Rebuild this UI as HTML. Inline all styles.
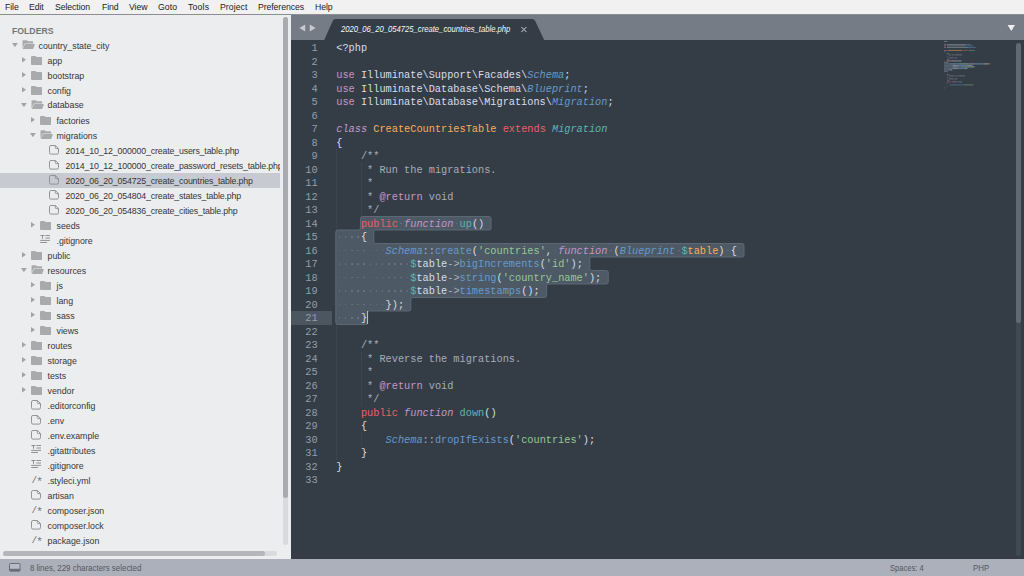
<!DOCTYPE html>
<html lang="en"><head><meta charset="utf-8"><title>2020_06_20_054725_create_countries_table.php - Sublime Text</title>
<style>
*{box-sizing:border-box;margin:0;padding:0}
html,body{width:1024px;height:576px;overflow:hidden;background:#343d46}
body{font-family:"Liberation Sans",sans-serif}
#app{position:relative;width:1024px;height:576px;overflow:hidden}
#menubar{position:absolute;left:0;top:0;width:1024px;height:14.5px;background:#f1f1f1;border-bottom:1px solid #8a8d92}
.mi{position:absolute;top:0.5px;height:14px;line-height:13px;font-size:8.7px;letter-spacing:-0.08px;color:#1a1a1a;white-space:nowrap}
#sidebar{position:absolute;left:0;top:14.5px;width:291px;height:544.5px;background:#ecedee;overflow:hidden}
#sidebar>*,.sbclip>*{position:absolute}
.sbclip{left:0;top:0;width:280px;height:544.5px;overflow:hidden}
#sidebar .folders{left:12px;top:8.5px;height:15px;line-height:15px;font-size:9.6px;font-weight:bold;color:#747577;transform:scaleX(0.905);transform-origin:0 50%}
.sbt{height:15px;line-height:15px;font-size:8.8px;color:#363636;white-space:nowrap;margin-top:-14.5px}
.selrow{left:0;width:280px;height:15px;background:#c7cad0;margin-top:-14.5px}
.icw{margin-top:-14.5px;line-height:0}
.ar{margin-top:-14.5px}
.srcic{margin-top:-14.5px;height:15px;line-height:15px;font-size:9.5px;font-family:"Liberation Mono",monospace;color:#6f7174;letter-spacing:-1px}
.srcic b{font-weight:normal;position:relative;top:2px;font-size:11px}
.vtrack{left:283px;top:2px;width:5px;height:528px;background:#d9dadd;border-radius:2.5px}
.vthumb{left:283px;top:2px;width:5px;height:481px;background:#a9abb1;border-radius:2.5px}
.htrack{left:3px;top:536px;width:274px;height:5px;background:#d9dadd;border-radius:2.5px}
.hthumb{left:3px;top:536px;width:262px;height:5px;background:#b4b6bb;border-radius:2.5px}
#tabbar{position:absolute;left:291px;top:14.5px;width:733px;height:26px;background:#767c85}
.tabsvg{position:absolute;left:0;top:0}
.tabtitle{position:absolute;left:49.5px;top:8px;height:13px;line-height:13px;font-size:8.8px;transform:scaleX(0.872);transform-origin:0 50%;font-style:italic;color:#f8f9fa;white-space:nowrap}
#editor{position:absolute;left:291px;top:40.2px;width:733px;height:518.8px;background:#343d46;overflow:hidden}
#editor>*{position:absolute;margin-left:-291px;margin-top:-40.2px}
.ln{left:291px;width:26.5px;text-align:right;height:13.5px;line-height:13.5px;font-family:"Liberation Mono",monospace;font-size:10.28px;color:#969da7;letter-spacing:-0.05px}
.cl{left:336.3px;height:13.5px;line-height:13.5px;font-family:"Liberation Mono",monospace;font-size:10.28px;color:#d8dee9;white-space:pre}
.cl .k{color:#c695c6}.cl .ki{color:#c695c6;font-style:italic}
.cl .r{color:#ec5f66}.cl .o{color:#f9ae58}
.cl .t{color:#5fb4b4}.cl .ti{color:#5fb4b4;font-style:italic}
.cl .b{color:#6699cc}.cl .bi{color:#6699cc;font-style:italic}
.cl .p{color:#adb4c0}.cl .g{color:#99c794}.cl .c{color:#a6acb9}
.gutterhl{left:291px;width:41px;height:13.5px;background:#4b5661}
.selsvg{left:0;top:0}
.dot{width:1.5px;height:1.5px;background:#6a7682;display:block;border-radius:0.4px}
.guide{width:0;border-left:1px dotted #434d57}
.caret{width:1.6px;height:13px;background:#f9ae58}
.mm{position:absolute;left:0;top:0;pointer-events:none}
.evtrack{position:absolute;left:1016px;top:43px;width:5px;height:513px;background:#3f4953;border-radius:2.5px}
.evthumb{position:absolute;left:1016px;top:43px;width:5px;height:280px;background:#606a74;border-radius:2.5px}
#statusbar{position:absolute;left:0;top:559.2px;width:1024px;height:17px;background:#abb0bb}
.sticon{position:absolute;left:9px;top:4px}
.st{position:absolute;top:1.5px;height:14px;line-height:14px;font-size:8.8px;transform:scaleX(0.9);transform-origin:0 50%;color:#55585f;white-space:nowrap}

</style></head>
<body>
<div id="app">
<div id="menubar"><span class="mi" style="left:5px">File</span><span class="mi" style="left:29px">Edit</span><span class="mi" style="left:55px">Selection</span><span class="mi" style="left:102px">Find</span><span class="mi" style="left:129px">View</span><span class="mi" style="left:158px;letter-spacing:0.05px">Goto</span><span class="mi" style="left:188px;letter-spacing:0.2px">Tools</span><span class="mi" style="left:220px;letter-spacing:0.05px">Project</span><span class="mi" style="left:258px">Preferences</span><span class="mi" style="left:315px">Help</span></div>
<div id="sidebar">
<div class="sbclip"><span class="folders">FOLDERS</span>
<svg class="ar" style="left:12.0px;top:42.8px" width="5.8" height="4.2" viewBox="0 0 5.8 4.2"><path d="M0 0 H5.8 L2.9 4.2 Z" fill="#a2a3a5"/></svg>
<span class="icw" style="left:21.8px;top:40.0px"><svg class="ic" width="13" height="9.4" viewBox="0 0 13 9.4"><path d="M0.5 1 Q0.5 0.2 1.3 0.2 H4.6 Q5.2 0.2 5.5 0.7 L5.8 1.2 H10.3 Q11.1 1.2 11.1 2 V3.4 H3.4 Q2.7 3.4 2.4 4.1 L0.5 8.6 Z" fill="#a9aaac"/><path d="M3.6 4 H12.4 Q13 4 12.8 4.6 L11.3 8.8 Q11.1 9.4 10.4 9.4 H1.2 Q0.5 9.4 0.8 8.8 L2.7 4.6 Q3 4 3.6 4 Z" fill="#a9aaac"/></svg></span>
<span class="sbt" style="left:38.5px;top:38.75px">country_state_city</span>
<svg class="ar" style="left:21.9px;top:57.3px" width="4.1" height="5.6" viewBox="0 0 4.1 5.6"><path d="M0 0 V5.6 L4.1 2.8 Z" fill="#a2a3a5"/></svg>
<span class="icw" style="left:30.9px;top:55.8px"><svg class="ic" width="11.2" height="9" viewBox="0 0 11.2 9"><path d="M0 0.9 Q0 0 0.9 0 H4.2 Q4.8 0 5.1 0.5 L5.4 1 H10.3 Q11.2 1 11.2 1.9 V8.1 Q11.2 9 10.3 9 H0.9 Q0 9 0 8.1 Z" fill="#a9aaac"/></svg></span>
<span class="sbt" style="left:47.5px;top:53.75px">app</span>
<svg class="ar" style="left:21.9px;top:72.3px" width="4.1" height="5.6" viewBox="0 0 4.1 5.6"><path d="M0 0 V5.6 L4.1 2.8 Z" fill="#a2a3a5"/></svg>
<span class="icw" style="left:30.9px;top:70.8px"><svg class="ic" width="11.2" height="9" viewBox="0 0 11.2 9"><path d="M0 0.9 Q0 0 0.9 0 H4.2 Q4.8 0 5.1 0.5 L5.4 1 H10.3 Q11.2 1 11.2 1.9 V8.1 Q11.2 9 10.3 9 H0.9 Q0 9 0 8.1 Z" fill="#a9aaac"/></svg></span>
<span class="sbt" style="left:47.5px;top:68.75px">bootstrap</span>
<svg class="ar" style="left:21.9px;top:87.3px" width="4.1" height="5.6" viewBox="0 0 4.1 5.6"><path d="M0 0 V5.6 L4.1 2.8 Z" fill="#a2a3a5"/></svg>
<span class="icw" style="left:30.9px;top:85.8px"><svg class="ic" width="11.2" height="9" viewBox="0 0 11.2 9"><path d="M0 0.9 Q0 0 0.9 0 H4.2 Q4.8 0 5.1 0.5 L5.4 1 H10.3 Q11.2 1 11.2 1.9 V8.1 Q11.2 9 10.3 9 H0.9 Q0 9 0 8.1 Z" fill="#a9aaac"/></svg></span>
<span class="sbt" style="left:47.5px;top:83.75px">config</span>
<svg class="ar" style="left:21.0px;top:102.8px" width="5.8" height="4.2" viewBox="0 0 5.8 4.2"><path d="M0 0 H5.8 L2.9 4.2 Z" fill="#a2a3a5"/></svg>
<span class="icw" style="left:30.8px;top:100.0px"><svg class="ic" width="13" height="9.4" viewBox="0 0 13 9.4"><path d="M0.5 1 Q0.5 0.2 1.3 0.2 H4.6 Q5.2 0.2 5.5 0.7 L5.8 1.2 H10.3 Q11.1 1.2 11.1 2 V3.4 H3.4 Q2.7 3.4 2.4 4.1 L0.5 8.6 Z" fill="#a9aaac"/><path d="M3.6 4 H12.4 Q13 4 12.8 4.6 L11.3 8.8 Q11.1 9.4 10.4 9.4 H1.2 Q0.5 9.4 0.8 8.8 L2.7 4.6 Q3 4 3.6 4 Z" fill="#a9aaac"/></svg></span>
<span class="sbt" style="left:47.5px;top:98.00px">database</span>
<svg class="ar" style="left:30.9px;top:117.3px" width="4.1" height="5.6" viewBox="0 0 4.1 5.6"><path d="M0 0 V5.6 L4.1 2.8 Z" fill="#a2a3a5"/></svg>
<span class="icw" style="left:39.9px;top:115.8px"><svg class="ic" width="11.2" height="9" viewBox="0 0 11.2 9"><path d="M0 0.9 Q0 0 0.9 0 H4.2 Q4.8 0 5.1 0.5 L5.4 1 H10.3 Q11.2 1 11.2 1.9 V8.1 Q11.2 9 10.3 9 H0.9 Q0 9 0 8.1 Z" fill="#a9aaac"/></svg></span>
<span class="sbt" style="left:56.5px;top:113.75px">factories</span>
<svg class="ar" style="left:30.0px;top:132.8px" width="5.8" height="4.2" viewBox="0 0 5.8 4.2"><path d="M0 0 H5.8 L2.9 4.2 Z" fill="#a2a3a5"/></svg>
<span class="icw" style="left:39.8px;top:130.0px"><svg class="ic" width="13" height="9.4" viewBox="0 0 13 9.4"><path d="M0.5 1 Q0.5 0.2 1.3 0.2 H4.6 Q5.2 0.2 5.5 0.7 L5.8 1.2 H10.3 Q11.1 1.2 11.1 2 V3.4 H3.4 Q2.7 3.4 2.4 4.1 L0.5 8.6 Z" fill="#a9aaac"/><path d="M3.6 4 H12.4 Q13 4 12.8 4.6 L11.3 8.8 Q11.1 9.4 10.4 9.4 H1.2 Q0.5 9.4 0.8 8.8 L2.7 4.6 Q3 4 3.6 4 Z" fill="#a9aaac"/></svg></span>
<span class="sbt" style="left:56.5px;top:128.75px">migrations</span>
<span class="icw" style="left:49.2px;top:145.1px"><svg class="ic" width="10" height="9.6" viewBox="0 0 10 9.6"><path d="M1.9 0.5 H6.4 L9.5 3.5 V7.7 Q9.5 9.1 8.1 9.1 H1.9 Q0.5 9.1 0.5 7.7 V1.9 Q0.5 0.5 1.9 0.5 Z M6.3 0.7 V2.6 Q6.3 3.6 7.3 3.6 H9.3" fill="none" stroke="#8e8f91" stroke-width="0.95"/></svg></span>
<span class="sbt" style="left:65.5px;top:143.75px;letter-spacing:-0.16px">2014_10_12_000000_create_users_table.php</span>
<span class="icw" style="left:49.2px;top:160.1px"><svg class="ic" width="10" height="9.6" viewBox="0 0 10 9.6"><path d="M1.9 0.5 H6.4 L9.5 3.5 V7.7 Q9.5 9.1 8.1 9.1 H1.9 Q0.5 9.1 0.5 7.7 V1.9 Q0.5 0.5 1.9 0.5 Z M6.3 0.7 V2.6 Q6.3 3.6 7.3 3.6 H9.3" fill="none" stroke="#8e8f91" stroke-width="0.95"/></svg></span>
<span class="sbt" style="left:65.5px;top:158.75px;letter-spacing:-0.16px">2014_10_12_100000_create_password_resets_table.php</span>
<div class="selrow" style="top:173.0px"></div>
<span class="icw" style="left:49.2px;top:175.1px"><svg class="ic" width="10" height="9.6" viewBox="0 0 10 9.6"><path d="M1.9 0.5 H6.4 L9.5 3.5 V7.7 Q9.5 9.1 8.1 9.1 H1.9 Q0.5 9.1 0.5 7.7 V1.9 Q0.5 0.5 1.9 0.5 Z M6.3 0.7 V2.6 Q6.3 3.6 7.3 3.6 H9.3" fill="none" stroke="#8e8f91" stroke-width="0.95"/></svg></span>
<span class="sbt" style="left:65.5px;top:173.75px;letter-spacing:-0.16px">2020_06_20_054725_create_countries_table.php</span>
<span class="icw" style="left:49.2px;top:190.1px"><svg class="ic" width="10" height="9.6" viewBox="0 0 10 9.6"><path d="M1.9 0.5 H6.4 L9.5 3.5 V7.7 Q9.5 9.1 8.1 9.1 H1.9 Q0.5 9.1 0.5 7.7 V1.9 Q0.5 0.5 1.9 0.5 Z M6.3 0.7 V2.6 Q6.3 3.6 7.3 3.6 H9.3" fill="none" stroke="#8e8f91" stroke-width="0.95"/></svg></span>
<span class="sbt" style="left:65.5px;top:188.75px;letter-spacing:-0.16px">2020_06_20_054804_create_states_table.php</span>
<span class="icw" style="left:49.2px;top:205.1px"><svg class="ic" width="10" height="9.6" viewBox="0 0 10 9.6"><path d="M1.9 0.5 H6.4 L9.5 3.5 V7.7 Q9.5 9.1 8.1 9.1 H1.9 Q0.5 9.1 0.5 7.7 V1.9 Q0.5 0.5 1.9 0.5 Z M6.3 0.7 V2.6 Q6.3 3.6 7.3 3.6 H9.3" fill="none" stroke="#8e8f91" stroke-width="0.95"/></svg></span>
<span class="sbt" style="left:65.5px;top:203.75px;letter-spacing:-0.16px">2020_06_20_054836_create_cities_table.php</span>
<svg class="ar" style="left:30.9px;top:222.3px" width="4.1" height="5.6" viewBox="0 0 4.1 5.6"><path d="M0 0 V5.6 L4.1 2.8 Z" fill="#a2a3a5"/></svg>
<span class="icw" style="left:39.9px;top:220.8px"><svg class="ic" width="11.2" height="9" viewBox="0 0 11.2 9"><path d="M0 0.9 Q0 0 0.9 0 H4.2 Q4.8 0 5.1 0.5 L5.4 1 H10.3 Q11.2 1 11.2 1.9 V8.1 Q11.2 9 10.3 9 H0.9 Q0 9 0 8.1 Z" fill="#a9aaac"/></svg></span>
<span class="sbt" style="left:56.5px;top:218.75px">seeds</span>
<span class="icw" style="left:40.0px;top:235.0px"><svg class="ic" width="10.4" height="8" viewBox="0 0 10.4 8"><path d="M0.4 0.5 H4.4 M2.5 0.5 V3.8 M5.4 0.5 H10.2 M5.4 3.0 H10.2 M0.2 5.4 H10.2 M0.2 7.5 H7" fill="none" stroke="#858688" stroke-width="0.9"/></svg></span>
<span class="sbt" style="left:56.5px;top:233.75px">.gitignore</span>
<svg class="ar" style="left:21.9px;top:252.3px" width="4.1" height="5.6" viewBox="0 0 4.1 5.6"><path d="M0 0 V5.6 L4.1 2.8 Z" fill="#a2a3a5"/></svg>
<span class="icw" style="left:30.9px;top:250.8px"><svg class="ic" width="11.2" height="9" viewBox="0 0 11.2 9"><path d="M0 0.9 Q0 0 0.9 0 H4.2 Q4.8 0 5.1 0.5 L5.4 1 H10.3 Q11.2 1 11.2 1.9 V8.1 Q11.2 9 10.3 9 H0.9 Q0 9 0 8.1 Z" fill="#a9aaac"/></svg></span>
<span class="sbt" style="left:47.5px;top:248.75px">public</span>
<svg class="ar" style="left:21.0px;top:267.8px" width="5.8" height="4.2" viewBox="0 0 5.8 4.2"><path d="M0 0 H5.8 L2.9 4.2 Z" fill="#a2a3a5"/></svg>
<span class="icw" style="left:30.8px;top:265.0px"><svg class="ic" width="13" height="9.4" viewBox="0 0 13 9.4"><path d="M0.5 1 Q0.5 0.2 1.3 0.2 H4.6 Q5.2 0.2 5.5 0.7 L5.8 1.2 H10.3 Q11.1 1.2 11.1 2 V3.4 H3.4 Q2.7 3.4 2.4 4.1 L0.5 8.6 Z" fill="#a9aaac"/><path d="M3.6 4 H12.4 Q13 4 12.8 4.6 L11.3 8.8 Q11.1 9.4 10.4 9.4 H1.2 Q0.5 9.4 0.8 8.8 L2.7 4.6 Q3 4 3.6 4 Z" fill="#a9aaac"/></svg></span>
<span class="sbt" style="left:47.5px;top:263.75px">resources</span>
<svg class="ar" style="left:30.9px;top:282.3px" width="4.1" height="5.6" viewBox="0 0 4.1 5.6"><path d="M0 0 V5.6 L4.1 2.8 Z" fill="#a2a3a5"/></svg>
<span class="icw" style="left:39.9px;top:280.8px"><svg class="ic" width="11.2" height="9" viewBox="0 0 11.2 9"><path d="M0 0.9 Q0 0 0.9 0 H4.2 Q4.8 0 5.1 0.5 L5.4 1 H10.3 Q11.2 1 11.2 1.9 V8.1 Q11.2 9 10.3 9 H0.9 Q0 9 0 8.1 Z" fill="#a9aaac"/></svg></span>
<span class="sbt" style="left:56.5px;top:278.75px">js</span>
<svg class="ar" style="left:30.9px;top:297.3px" width="4.1" height="5.6" viewBox="0 0 4.1 5.6"><path d="M0 0 V5.6 L4.1 2.8 Z" fill="#a2a3a5"/></svg>
<span class="icw" style="left:39.9px;top:295.8px"><svg class="ic" width="11.2" height="9" viewBox="0 0 11.2 9"><path d="M0 0.9 Q0 0 0.9 0 H4.2 Q4.8 0 5.1 0.5 L5.4 1 H10.3 Q11.2 1 11.2 1.9 V8.1 Q11.2 9 10.3 9 H0.9 Q0 9 0 8.1 Z" fill="#a9aaac"/></svg></span>
<span class="sbt" style="left:56.5px;top:293.75px">lang</span>
<svg class="ar" style="left:30.9px;top:312.3px" width="4.1" height="5.6" viewBox="0 0 4.1 5.6"><path d="M0 0 V5.6 L4.1 2.8 Z" fill="#a2a3a5"/></svg>
<span class="icw" style="left:39.9px;top:310.8px"><svg class="ic" width="11.2" height="9" viewBox="0 0 11.2 9"><path d="M0 0.9 Q0 0 0.9 0 H4.2 Q4.8 0 5.1 0.5 L5.4 1 H10.3 Q11.2 1 11.2 1.9 V8.1 Q11.2 9 10.3 9 H0.9 Q0 9 0 8.1 Z" fill="#a9aaac"/></svg></span>
<span class="sbt" style="left:56.5px;top:308.75px">sass</span>
<svg class="ar" style="left:30.9px;top:327.3px" width="4.1" height="5.6" viewBox="0 0 4.1 5.6"><path d="M0 0 V5.6 L4.1 2.8 Z" fill="#a2a3a5"/></svg>
<span class="icw" style="left:39.9px;top:325.8px"><svg class="ic" width="11.2" height="9" viewBox="0 0 11.2 9"><path d="M0 0.9 Q0 0 0.9 0 H4.2 Q4.8 0 5.1 0.5 L5.4 1 H10.3 Q11.2 1 11.2 1.9 V8.1 Q11.2 9 10.3 9 H0.9 Q0 9 0 8.1 Z" fill="#a9aaac"/></svg></span>
<span class="sbt" style="left:56.5px;top:323.75px">views</span>
<svg class="ar" style="left:21.9px;top:342.3px" width="4.1" height="5.6" viewBox="0 0 4.1 5.6"><path d="M0 0 V5.6 L4.1 2.8 Z" fill="#a2a3a5"/></svg>
<span class="icw" style="left:30.9px;top:340.8px"><svg class="ic" width="11.2" height="9" viewBox="0 0 11.2 9"><path d="M0 0.9 Q0 0 0.9 0 H4.2 Q4.8 0 5.1 0.5 L5.4 1 H10.3 Q11.2 1 11.2 1.9 V8.1 Q11.2 9 10.3 9 H0.9 Q0 9 0 8.1 Z" fill="#a9aaac"/></svg></span>
<span class="sbt" style="left:47.5px;top:338.75px">routes</span>
<svg class="ar" style="left:21.9px;top:357.3px" width="4.1" height="5.6" viewBox="0 0 4.1 5.6"><path d="M0 0 V5.6 L4.1 2.8 Z" fill="#a2a3a5"/></svg>
<span class="icw" style="left:30.9px;top:355.8px"><svg class="ic" width="11.2" height="9" viewBox="0 0 11.2 9"><path d="M0 0.9 Q0 0 0.9 0 H4.2 Q4.8 0 5.1 0.5 L5.4 1 H10.3 Q11.2 1 11.2 1.9 V8.1 Q11.2 9 10.3 9 H0.9 Q0 9 0 8.1 Z" fill="#a9aaac"/></svg></span>
<span class="sbt" style="left:47.5px;top:353.75px">storage</span>
<svg class="ar" style="left:21.9px;top:372.3px" width="4.1" height="5.6" viewBox="0 0 4.1 5.6"><path d="M0 0 V5.6 L4.1 2.8 Z" fill="#a2a3a5"/></svg>
<span class="icw" style="left:30.9px;top:370.8px"><svg class="ic" width="11.2" height="9" viewBox="0 0 11.2 9"><path d="M0 0.9 Q0 0 0.9 0 H4.2 Q4.8 0 5.1 0.5 L5.4 1 H10.3 Q11.2 1 11.2 1.9 V8.1 Q11.2 9 10.3 9 H0.9 Q0 9 0 8.1 Z" fill="#a9aaac"/></svg></span>
<span class="sbt" style="left:47.5px;top:368.75px">tests</span>
<svg class="ar" style="left:21.9px;top:387.3px" width="4.1" height="5.6" viewBox="0 0 4.1 5.6"><path d="M0 0 V5.6 L4.1 2.8 Z" fill="#a2a3a5"/></svg>
<span class="icw" style="left:30.9px;top:385.8px"><svg class="ic" width="11.2" height="9" viewBox="0 0 11.2 9"><path d="M0 0.9 Q0 0 0.9 0 H4.2 Q4.8 0 5.1 0.5 L5.4 1 H10.3 Q11.2 1 11.2 1.9 V8.1 Q11.2 9 10.3 9 H0.9 Q0 9 0 8.1 Z" fill="#a9aaac"/></svg></span>
<span class="sbt" style="left:47.5px;top:383.75px">vendor</span>
<span class="icw" style="left:31.2px;top:400.1px"><svg class="ic" width="10" height="9.6" viewBox="0 0 10 9.6"><path d="M1.9 0.5 H6.4 L9.5 3.5 V7.7 Q9.5 9.1 8.1 9.1 H1.9 Q0.5 9.1 0.5 7.7 V1.9 Q0.5 0.5 1.9 0.5 Z M6.3 0.7 V2.6 Q6.3 3.6 7.3 3.6 H9.3" fill="none" stroke="#8e8f91" stroke-width="0.95"/></svg></span>
<span class="sbt" style="left:47.5px;top:398.75px">.editorconfig</span>
<span class="icw" style="left:31.2px;top:415.1px"><svg class="ic" width="10" height="9.6" viewBox="0 0 10 9.6"><path d="M1.9 0.5 H6.4 L9.5 3.5 V7.7 Q9.5 9.1 8.1 9.1 H1.9 Q0.5 9.1 0.5 7.7 V1.9 Q0.5 0.5 1.9 0.5 Z M6.3 0.7 V2.6 Q6.3 3.6 7.3 3.6 H9.3" fill="none" stroke="#8e8f91" stroke-width="0.95"/></svg></span>
<span class="sbt" style="left:47.5px;top:413.75px">.env</span>
<span class="icw" style="left:31.2px;top:430.1px"><svg class="ic" width="10" height="9.6" viewBox="0 0 10 9.6"><path d="M1.9 0.5 H6.4 L9.5 3.5 V7.7 Q9.5 9.1 8.1 9.1 H1.9 Q0.5 9.1 0.5 7.7 V1.9 Q0.5 0.5 1.9 0.5 Z M6.3 0.7 V2.6 Q6.3 3.6 7.3 3.6 H9.3" fill="none" stroke="#8e8f91" stroke-width="0.95"/></svg></span>
<span class="sbt" style="left:47.5px;top:428.75px">.env.example</span>
<span class="icw" style="left:31.0px;top:445.0px"><svg class="ic" width="10.4" height="8" viewBox="0 0 10.4 8"><path d="M0.4 0.5 H4.4 M2.5 0.5 V3.8 M5.4 0.5 H10.2 M5.4 3.0 H10.2 M0.2 5.4 H10.2 M0.2 7.5 H7" fill="none" stroke="#858688" stroke-width="0.9"/></svg></span>
<span class="sbt" style="left:47.5px;top:443.75px">.gitattributes</span>
<span class="icw" style="left:31.0px;top:460.0px"><svg class="ic" width="10.4" height="8" viewBox="0 0 10.4 8"><path d="M0.4 0.5 H4.4 M2.5 0.5 V3.8 M5.4 0.5 H10.2 M5.4 3.0 H10.2 M0.2 5.4 H10.2 M0.2 7.5 H7" fill="none" stroke="#858688" stroke-width="0.9"/></svg></span>
<span class="sbt" style="left:47.5px;top:458.75px">.gitignore</span>
<span class="srcic" style="left:31.5px;top:473.0px">/<b>*</b></span>
<span class="sbt" style="left:47.5px;top:473.75px">.styleci.yml</span>
<span class="icw" style="left:31.2px;top:490.1px"><svg class="ic" width="10" height="9.6" viewBox="0 0 10 9.6"><path d="M1.9 0.5 H6.4 L9.5 3.5 V7.7 Q9.5 9.1 8.1 9.1 H1.9 Q0.5 9.1 0.5 7.7 V1.9 Q0.5 0.5 1.9 0.5 Z M6.3 0.7 V2.6 Q6.3 3.6 7.3 3.6 H9.3" fill="none" stroke="#8e8f91" stroke-width="0.95"/></svg></span>
<span class="sbt" style="left:47.5px;top:488.75px">artisan</span>
<span class="srcic" style="left:31.5px;top:503.0px">/<b>*</b></span>
<span class="sbt" style="left:47.5px;top:503.75px">composer.json</span>
<span class="icw" style="left:31.2px;top:520.1px"><svg class="ic" width="10" height="9.6" viewBox="0 0 10 9.6"><path d="M1.9 0.5 H6.4 L9.5 3.5 V7.7 Q9.5 9.1 8.1 9.1 H1.9 Q0.5 9.1 0.5 7.7 V1.9 Q0.5 0.5 1.9 0.5 Z M6.3 0.7 V2.6 Q6.3 3.6 7.3 3.6 H9.3" fill="none" stroke="#8e8f91" stroke-width="0.95"/></svg></span>
<span class="sbt" style="left:47.5px;top:518.75px">composer.lock</span>
<span class="srcic" style="left:31.5px;top:533.0px">/<b>*</b></span>
<span class="sbt" style="left:47.5px;top:533.75px">package.json</span>
</div>
<div class="vtrack"></div><div class="vthumb"></div>
<div class="htrack"></div><div class="hthumb"></div>
</div>
<div id="tabbar">
<svg class="tabsvg" width="733" height="26" viewBox="0 0 733 26"><path d="M32.8 26 L41.8 5.8 Q42.7 4 44.7 4 H241.3 Q243.2 4 244.1 5.8 L253.6 26 Z" fill="#343d46"/><path d="M8.4 13 L14.2 9.4 V16.6 Z M18.8 9.4 V16.6 L24.6 13 Z" fill="#c6cad0"/><path d="M716.6 10.1 H724 L720.3 16 Z" fill="#eceef0"/><path d="M230.4 12 L235.4 17 M235.4 12 L230.4 17" stroke="#b4b9c1" stroke-width="1.05" fill="none"/></svg>
<span class="tabtitle">2020_06_20_054725_create_countries_table.php</span>
</div>
<div id="editor">
<div class="gutterhl" style="top:311.00px"></div>
<div class="guide" style="left:336.3px;top:149.0px;height:310.5px"></div>
<div class="guide" style="left:361.0px;top:162.5px;height:54.0px"></div>
<div class="guide" style="left:361.0px;top:351.5px;height:54.0px"></div>
<div class="guide" style="left:361.0px;top:432.5px;height:13.5px"></div>
<svg class="selsvg" width="1024" height="576" viewBox="0 0 1024 576"><path d="M489.05 216.50 Q491.05 216.50 491.05 218.50 L491.05 228.00 Q491.05 230.00 489.05 230.00 L375.82 230.00 Q373.82 230.00 373.82 232.00 L373.82 241.50 Q373.82 243.50 375.82 243.50 L742.02 243.50 Q744.02 243.50 744.02 245.50 L744.02 255.00 Q744.02 257.00 742.02 257.00 L591.77 257.00 Q589.77 257.00 589.77 259.00 L589.77 268.50 Q589.77 270.50 591.77 270.50 L606.28 270.50 Q608.28 270.50 608.28 272.50 L608.28 282.00 Q608.28 284.00 606.28 284.00 L548.58 284.00 Q546.58 284.00 546.58 286.00 L546.58 295.50 Q546.58 297.50 544.58 297.50 L412.84 297.50 Q410.84 297.50 410.84 299.50 L410.84 309.00 Q410.84 311.00 408.84 311.00 L369.65 311.00 Q367.65 311.00 367.65 313.00 L367.65 322.50 Q367.65 324.50 365.65 324.50 L337.80 324.50 Q335.80 324.50 335.80 322.50 L335.80 232.00 Q335.80 230.00 337.80 230.00 L358.48 230.00 Q360.48 230.00 360.48 228.00 L360.48 218.50 Q360.48 216.50 362.48 216.50 Z" fill="#4d5965" stroke="#606c78" stroke-width="0.9"/></svg>
<i class="dot" style="left:400.3px;top:222.8px"></i><i class="dot" style="left:455.9px;top:222.8px"></i>
<i class="dot" style="left:338.6px;top:236.3px"></i><i class="dot" style="left:344.8px;top:236.3px"></i><i class="dot" style="left:351.0px;top:236.3px"></i><i class="dot" style="left:357.1px;top:236.3px"></i>
<i class="dot" style="left:338.6px;top:249.8px"></i><i class="dot" style="left:344.8px;top:249.8px"></i><i class="dot" style="left:351.0px;top:249.8px"></i><i class="dot" style="left:357.1px;top:249.8px"></i><i class="dot" style="left:363.3px;top:249.8px"></i><i class="dot" style="left:369.5px;top:249.8px"></i><i class="dot" style="left:375.7px;top:249.8px"></i><i class="dot" style="left:381.8px;top:249.8px"></i><i class="dot" style="left:554.6px;top:249.8px"></i><i class="dot" style="left:610.1px;top:249.8px"></i><i class="dot" style="left:678.0px;top:249.8px"></i><i class="dot" style="left:727.3px;top:249.8px"></i>
<i class="dot" style="left:338.6px;top:263.4px"></i><i class="dot" style="left:344.8px;top:263.4px"></i><i class="dot" style="left:351.0px;top:263.4px"></i><i class="dot" style="left:357.1px;top:263.4px"></i><i class="dot" style="left:363.3px;top:263.4px"></i><i class="dot" style="left:369.5px;top:263.4px"></i><i class="dot" style="left:375.7px;top:263.4px"></i><i class="dot" style="left:381.8px;top:263.4px"></i><i class="dot" style="left:388.0px;top:263.4px"></i><i class="dot" style="left:394.2px;top:263.4px"></i><i class="dot" style="left:400.3px;top:263.4px"></i><i class="dot" style="left:406.5px;top:263.4px"></i>
<i class="dot" style="left:338.6px;top:276.9px"></i><i class="dot" style="left:344.8px;top:276.9px"></i><i class="dot" style="left:351.0px;top:276.9px"></i><i class="dot" style="left:357.1px;top:276.9px"></i><i class="dot" style="left:363.3px;top:276.9px"></i><i class="dot" style="left:369.5px;top:276.9px"></i><i class="dot" style="left:375.7px;top:276.9px"></i><i class="dot" style="left:381.8px;top:276.9px"></i><i class="dot" style="left:388.0px;top:276.9px"></i><i class="dot" style="left:394.2px;top:276.9px"></i><i class="dot" style="left:400.3px;top:276.9px"></i><i class="dot" style="left:406.5px;top:276.9px"></i>
<i class="dot" style="left:338.6px;top:290.4px"></i><i class="dot" style="left:344.8px;top:290.4px"></i><i class="dot" style="left:351.0px;top:290.4px"></i><i class="dot" style="left:357.1px;top:290.4px"></i><i class="dot" style="left:363.3px;top:290.4px"></i><i class="dot" style="left:369.5px;top:290.4px"></i><i class="dot" style="left:375.7px;top:290.4px"></i><i class="dot" style="left:381.8px;top:290.4px"></i><i class="dot" style="left:388.0px;top:290.4px"></i><i class="dot" style="left:394.2px;top:290.4px"></i><i class="dot" style="left:400.3px;top:290.4px"></i><i class="dot" style="left:406.5px;top:290.4px"></i>
<i class="dot" style="left:338.6px;top:303.9px"></i><i class="dot" style="left:344.8px;top:303.9px"></i><i class="dot" style="left:351.0px;top:303.9px"></i><i class="dot" style="left:357.1px;top:303.9px"></i><i class="dot" style="left:363.3px;top:303.9px"></i><i class="dot" style="left:369.5px;top:303.9px"></i><i class="dot" style="left:375.7px;top:303.9px"></i><i class="dot" style="left:381.8px;top:303.9px"></i>
<i class="dot" style="left:338.6px;top:317.4px"></i><i class="dot" style="left:344.8px;top:317.4px"></i><i class="dot" style="left:351.0px;top:317.4px"></i><i class="dot" style="left:357.1px;top:317.4px"></i>
<span class="ln" style="top:42.40px">1</span>
<pre class="cl" style="top:42.40px">&lt;?php</pre>
<span class="ln" style="top:55.90px">2</span>
<span class="ln" style="top:69.40px">3</span>
<pre class="cl" style="top:69.40px"><span class="k">use</span> Illuminate\Support\Facades\<span class="bi">Schema</span>;</pre>
<span class="ln" style="top:82.90px">4</span>
<pre class="cl" style="top:82.90px"><span class="k">use</span> Illuminate\Database\Schema\<span class="bi">Blueprint</span>;</pre>
<span class="ln" style="top:96.40px">5</span>
<pre class="cl" style="top:96.40px"><span class="k">use</span> Illuminate\Database\Migrations\<span class="bi">Migration</span>;</pre>
<span class="ln" style="top:109.90px">6</span>
<span class="ln" style="top:123.40px">7</span>
<pre class="cl" style="top:123.40px"><span class="ki">class</span> <span class="o">CreateCountriesTable</span> <span class="r">extends</span> <span class="ti">Migration</span></pre>
<span class="ln" style="top:136.90px">8</span>
<pre class="cl" style="top:136.90px">{</pre>
<span class="ln" style="top:150.40px">9</span>
<pre class="cl" style="top:150.40px">    <span class="c">/**</span></pre>
<span class="ln" style="top:163.90px">10</span>
<pre class="cl" style="top:163.90px">    <span class="c"> * Run the migrations.</span></pre>
<span class="ln" style="top:177.40px">11</span>
<pre class="cl" style="top:177.40px">    <span class="c"> *</span></pre>
<span class="ln" style="top:190.90px">12</span>
<pre class="cl" style="top:190.90px">    <span class="c"> * </span><span class="k">@return</span><span class="c"> void</span></pre>
<span class="ln" style="top:204.40px">13</span>
<pre class="cl" style="top:204.40px">    <span class="c"> */</span></pre>
<span class="ln" style="top:217.90px">14</span>
<pre class="cl" style="top:217.90px">    <span class="r">public</span> <span class="ki">function</span> <span class="t">up</span>()</pre>
<span class="ln" style="top:231.40px">15</span>
<pre class="cl" style="top:231.40px">    {</pre>
<span class="ln" style="top:244.90px">16</span>
<pre class="cl" style="top:244.90px">        <span class="bi">Schema</span><span class="p">::</span><span class="b">create</span>(<span class="g">'countries'</span>, <span class="ki">function</span> (<span class="bi">Blueprint</span> <span class="t">$</span><span class="o">table</span>) {</pre>
<span class="ln" style="top:258.40px">17</span>
<pre class="cl" style="top:258.40px">            <span class="t">$</span>table<span class="p">-&gt;</span><span class="b">bigIncrements</span>(<span class="g">'id'</span>);</pre>
<span class="ln" style="top:271.90px">18</span>
<pre class="cl" style="top:271.90px">            <span class="t">$</span>table<span class="p">-&gt;</span><span class="b">string</span>(<span class="g">'country_name'</span>);</pre>
<span class="ln" style="top:285.40px">19</span>
<pre class="cl" style="top:285.40px">            <span class="t">$</span>table<span class="p">-&gt;</span><span class="b">timestamps</span>();</pre>
<span class="ln" style="top:298.90px">20</span>
<pre class="cl" style="top:298.90px">        });</pre>
<span class="ln" style="top:312.40px">21</span>
<pre class="cl" style="top:312.40px">    }</pre>
<span class="ln" style="top:325.90px">22</span>
<span class="ln" style="top:339.40px">23</span>
<pre class="cl" style="top:339.40px">    <span class="c">/**</span></pre>
<span class="ln" style="top:352.90px">24</span>
<pre class="cl" style="top:352.90px">    <span class="c"> * Reverse the migrations.</span></pre>
<span class="ln" style="top:366.40px">25</span>
<pre class="cl" style="top:366.40px">    <span class="c"> *</span></pre>
<span class="ln" style="top:379.90px">26</span>
<pre class="cl" style="top:379.90px">    <span class="c"> * </span><span class="k">@return</span><span class="c"> void</span></pre>
<span class="ln" style="top:393.40px">27</span>
<pre class="cl" style="top:393.40px">    <span class="c"> */</span></pre>
<span class="ln" style="top:406.90px">28</span>
<pre class="cl" style="top:406.90px">    <span class="r">public</span> <span class="ki">function</span> <span class="t">down</span>()</pre>
<span class="ln" style="top:420.40px">29</span>
<pre class="cl" style="top:420.40px">    {</pre>
<span class="ln" style="top:433.90px">30</span>
<pre class="cl" style="top:433.90px">        <span class="bi">Schema</span><span class="p">::</span><span class="b">dropIfExists</span>(<span class="g">'countries'</span>);</pre>
<span class="ln" style="top:447.40px">31</span>
<pre class="cl" style="top:447.40px">    }</pre>
<span class="ln" style="top:460.90px">32</span>
<pre class="cl" style="top:460.90px">}</pre>
<span class="ln" style="top:474.40px">33</span>
<div class="caret" style="left:366.9px;top:311.3px"></div>
</div>
<svg class="mm" width="1024" height="576" viewBox="0 0 1024 576"><rect x="946.74" y="60.10" width="14.81" height="1.50" fill="#55616c"/><rect x="943.94" y="61.60" width="4.31" height="1.50" fill="#55616c"/><rect x="943.94" y="63.10" width="46.31" height="1.50" fill="#55616c"/><rect x="943.94" y="64.60" width="28.81" height="1.50" fill="#55616c"/><rect x="943.94" y="66.10" width="30.91" height="1.50" fill="#55616c"/><rect x="943.94" y="67.60" width="23.91" height="1.50" fill="#55616c"/><rect x="943.94" y="69.10" width="8.51" height="1.50" fill="#55616c"/><rect x="943.94" y="70.60" width="3.61" height="1.50" fill="#55616c"/><rect x="944.00" y="40.95" width="3.50" height="0.9" fill="#aeb4bd" opacity="0.5"/><rect x="944.00" y="43.95" width="2.10" height="0.9" fill="#9d7ba3" opacity="0.65"/><rect x="946.80" y="43.95" width="18.90" height="0.9" fill="#aeb4bd" opacity="0.5"/><rect x="965.70" y="43.95" width="4.20" height="0.9" fill="#5583ad" opacity="0.65"/><rect x="969.90" y="43.95" width="0.70" height="0.9" fill="#aeb4bd" opacity="0.5"/><rect x="944.00" y="45.45" width="2.10" height="0.9" fill="#9d7ba3" opacity="0.65"/><rect x="946.80" y="45.45" width="18.90" height="0.9" fill="#aeb4bd" opacity="0.5"/><rect x="965.70" y="45.45" width="6.30" height="0.9" fill="#5583ad" opacity="0.65"/><rect x="972.00" y="45.45" width="0.70" height="0.9" fill="#aeb4bd" opacity="0.5"/><rect x="944.00" y="46.95" width="2.10" height="0.9" fill="#9d7ba3" opacity="0.65"/><rect x="946.80" y="46.95" width="21.70" height="0.9" fill="#aeb4bd" opacity="0.5"/><rect x="968.50" y="46.95" width="6.30" height="0.9" fill="#5583ad" opacity="0.65"/><rect x="974.80" y="46.95" width="0.70" height="0.9" fill="#aeb4bd" opacity="0.5"/><rect x="944.00" y="49.95" width="3.50" height="0.9" fill="#9d7ba3" opacity="0.65"/><rect x="948.20" y="49.95" width="14.00" height="0.9" fill="#d89a52" opacity="0.65"/><rect x="962.90" y="49.95" width="4.90" height="0.9" fill="#c4545b" opacity="0.65"/><rect x="968.50" y="49.95" width="6.30" height="0.9" fill="#529a9a" opacity="0.65"/><rect x="944.00" y="51.45" width="0.70" height="0.9" fill="#aeb4bd" opacity="0.5"/><rect x="946.80" y="52.95" width="2.10" height="0.9" fill="#858b96" opacity="0.65"/><rect x="947.50" y="54.45" width="0.70" height="0.9" fill="#858b96" opacity="0.65"/><rect x="948.90" y="54.45" width="2.10" height="0.9" fill="#858b96" opacity="0.65"/><rect x="951.70" y="54.45" width="2.10" height="0.9" fill="#858b96" opacity="0.65"/><rect x="954.50" y="54.45" width="7.70" height="0.9" fill="#858b96" opacity="0.65"/><rect x="947.50" y="55.95" width="0.70" height="0.9" fill="#858b96" opacity="0.65"/><rect x="947.50" y="57.45" width="0.70" height="0.9" fill="#858b96" opacity="0.65"/><rect x="948.90" y="57.45" width="4.90" height="0.9" fill="#9d7ba3" opacity="0.65"/><rect x="954.50" y="57.45" width="2.80" height="0.9" fill="#858b96" opacity="0.65"/><rect x="947.50" y="58.95" width="1.40" height="0.9" fill="#858b96" opacity="0.65"/><rect x="946.80" y="60.45" width="4.20" height="0.9" fill="#c4545b" opacity="0.65"/><rect x="951.70" y="60.45" width="5.60" height="0.9" fill="#9d7ba3" opacity="0.65"/><rect x="958.00" y="60.45" width="1.40" height="0.9" fill="#529a9a" opacity="0.65"/><rect x="959.40" y="60.45" width="1.40" height="0.9" fill="#aeb4bd" opacity="0.5"/><rect x="946.80" y="61.95" width="0.70" height="0.9" fill="#aeb4bd" opacity="0.5"/><rect x="949.60" y="63.45" width="4.20" height="0.9" fill="#5583ad" opacity="0.65"/><rect x="953.80" y="63.45" width="1.40" height="0.9" fill="#8c929c" opacity="0.65"/><rect x="955.20" y="63.45" width="4.20" height="0.9" fill="#5583ad" opacity="0.65"/><rect x="959.40" y="63.45" width="0.70" height="0.9" fill="#aeb4bd" opacity="0.5"/><rect x="960.10" y="63.45" width="7.70" height="0.9" fill="#82a880" opacity="0.65"/><rect x="967.80" y="63.45" width="0.70" height="0.9" fill="#aeb4bd" opacity="0.5"/><rect x="969.20" y="63.45" width="5.60" height="0.9" fill="#9d7ba3" opacity="0.65"/><rect x="975.50" y="63.45" width="0.70" height="0.9" fill="#aeb4bd" opacity="0.5"/><rect x="976.20" y="63.45" width="6.30" height="0.9" fill="#5583ad" opacity="0.65"/><rect x="983.20" y="63.45" width="0.70" height="0.9" fill="#529a9a" opacity="0.65"/><rect x="983.90" y="63.45" width="3.50" height="0.9" fill="#d89a52" opacity="0.65"/><rect x="987.40" y="63.45" width="0.70" height="0.9" fill="#aeb4bd" opacity="0.5"/><rect x="988.80" y="63.45" width="0.70" height="0.9" fill="#aeb4bd" opacity="0.5"/><rect x="952.40" y="64.95" width="0.70" height="0.9" fill="#529a9a" opacity="0.65"/><rect x="953.10" y="64.95" width="3.50" height="0.9" fill="#aeb4bd" opacity="0.5"/><rect x="956.60" y="64.95" width="1.40" height="0.9" fill="#8c929c" opacity="0.65"/><rect x="958.00" y="64.95" width="9.10" height="0.9" fill="#5583ad" opacity="0.65"/><rect x="967.10" y="64.95" width="0.70" height="0.9" fill="#aeb4bd" opacity="0.5"/><rect x="967.80" y="64.95" width="2.80" height="0.9" fill="#82a880" opacity="0.65"/><rect x="970.60" y="64.95" width="1.40" height="0.9" fill="#aeb4bd" opacity="0.5"/><rect x="952.40" y="66.45" width="0.70" height="0.9" fill="#529a9a" opacity="0.65"/><rect x="953.10" y="66.45" width="3.50" height="0.9" fill="#aeb4bd" opacity="0.5"/><rect x="956.60" y="66.45" width="1.40" height="0.9" fill="#8c929c" opacity="0.65"/><rect x="958.00" y="66.45" width="4.20" height="0.9" fill="#5583ad" opacity="0.65"/><rect x="962.20" y="66.45" width="0.70" height="0.9" fill="#aeb4bd" opacity="0.5"/><rect x="962.90" y="66.45" width="9.80" height="0.9" fill="#82a880" opacity="0.65"/><rect x="972.70" y="66.45" width="1.40" height="0.9" fill="#aeb4bd" opacity="0.5"/><rect x="952.40" y="67.95" width="0.70" height="0.9" fill="#529a9a" opacity="0.65"/><rect x="953.10" y="67.95" width="3.50" height="0.9" fill="#aeb4bd" opacity="0.5"/><rect x="956.60" y="67.95" width="1.40" height="0.9" fill="#8c929c" opacity="0.65"/><rect x="958.00" y="67.95" width="7.00" height="0.9" fill="#5583ad" opacity="0.65"/><rect x="965.00" y="67.95" width="2.10" height="0.9" fill="#aeb4bd" opacity="0.5"/><rect x="949.60" y="69.45" width="2.10" height="0.9" fill="#aeb4bd" opacity="0.5"/><rect x="946.80" y="70.95" width="0.70" height="0.9" fill="#aeb4bd" opacity="0.5"/><rect x="946.80" y="73.95" width="2.10" height="0.9" fill="#858b96" opacity="0.65"/><rect x="947.50" y="75.45" width="0.70" height="0.9" fill="#858b96" opacity="0.65"/><rect x="948.90" y="75.45" width="4.90" height="0.9" fill="#858b96" opacity="0.65"/><rect x="954.50" y="75.45" width="2.10" height="0.9" fill="#858b96" opacity="0.65"/><rect x="957.30" y="75.45" width="7.70" height="0.9" fill="#858b96" opacity="0.65"/><rect x="947.50" y="76.95" width="0.70" height="0.9" fill="#858b96" opacity="0.65"/><rect x="947.50" y="78.45" width="0.70" height="0.9" fill="#858b96" opacity="0.65"/><rect x="948.90" y="78.45" width="4.90" height="0.9" fill="#9d7ba3" opacity="0.65"/><rect x="954.50" y="78.45" width="2.80" height="0.9" fill="#858b96" opacity="0.65"/><rect x="947.50" y="79.95" width="1.40" height="0.9" fill="#858b96" opacity="0.65"/><rect x="946.80" y="81.45" width="4.20" height="0.9" fill="#c4545b" opacity="0.65"/><rect x="951.70" y="81.45" width="5.60" height="0.9" fill="#9d7ba3" opacity="0.65"/><rect x="958.00" y="81.45" width="2.80" height="0.9" fill="#529a9a" opacity="0.65"/><rect x="960.80" y="81.45" width="1.40" height="0.9" fill="#aeb4bd" opacity="0.5"/><rect x="946.80" y="82.95" width="0.70" height="0.9" fill="#aeb4bd" opacity="0.5"/><rect x="949.60" y="84.45" width="4.20" height="0.9" fill="#5583ad" opacity="0.65"/><rect x="953.80" y="84.45" width="1.40" height="0.9" fill="#8c929c" opacity="0.65"/><rect x="955.20" y="84.45" width="8.40" height="0.9" fill="#5583ad" opacity="0.65"/><rect x="963.60" y="84.45" width="0.70" height="0.9" fill="#aeb4bd" opacity="0.5"/><rect x="964.30" y="84.45" width="7.70" height="0.9" fill="#82a880" opacity="0.65"/><rect x="972.00" y="84.45" width="1.40" height="0.9" fill="#aeb4bd" opacity="0.5"/><rect x="946.80" y="85.95" width="0.70" height="0.9" fill="#aeb4bd" opacity="0.5"/><rect x="944.00" y="87.45" width="0.70" height="0.9" fill="#aeb4bd" opacity="0.5"/></svg>
<div class="evtrack"></div><div class="evthumb"></div>
<div id="statusbar">
<svg class="sticon" width="11.6" height="8.6" viewBox="0 0 11.6 8.6"><rect x="0.5" y="0.5" width="10.6" height="7.6" rx="1" fill="#b7bcc6" stroke="#696d75" stroke-width="1"/><rect x="0.6" y="5.8" width="10.4" height="2.4" fill="#696d75"/></svg>
<span class="st" style="left:30px">8 lines, 229 characters selected</span>
<span class="st" style="left:889.5px;transform:scaleX(0.86)">Spaces: 4</span>
<span class="st" style="left:973px">PHP</span>
</div>
</div>
</body></html>
